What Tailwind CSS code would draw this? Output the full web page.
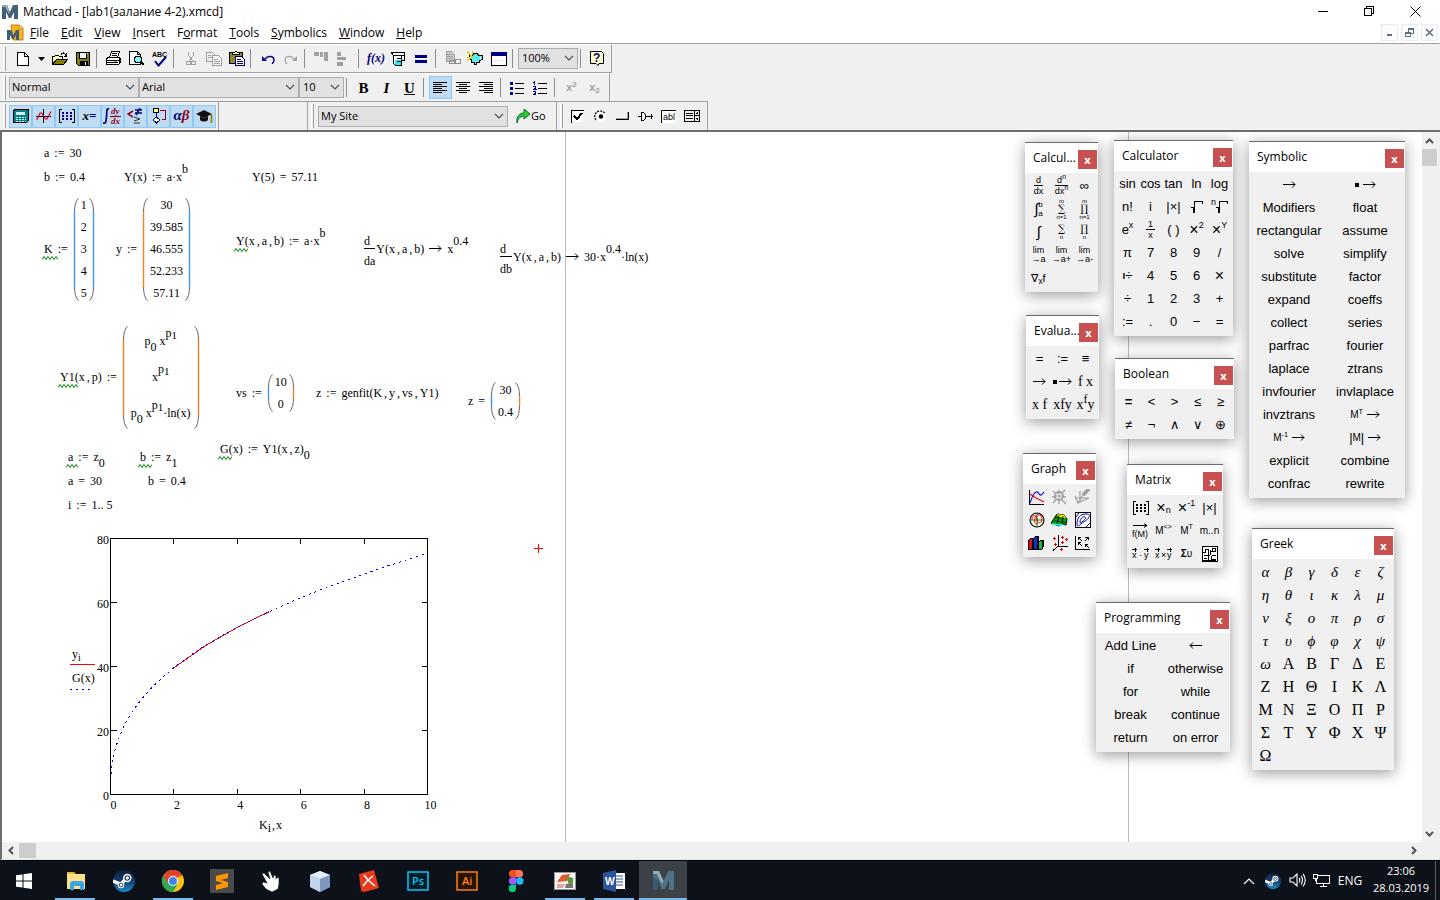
<!DOCTYPE html>
<html lang="ru">
<head>
    <meta charset="UTF-8">
    <meta name="viewport" content="width=device-width, initial-scale=1.0">
    <title>Mathcad - [lab1(залание 4-2).xmcd]</title>
    <script src="https://cdn.jsdelivr.net/npm/@tailwindcss/browser@4"></script>
</head>
<body class="h-screen flex flex-col overflow-hidden bg-white text-black text-xs font-['Open_Sans',sans-serif]">

    <!-- Title bar -->
    <header class="flex items-center h-[22px] shrink-0">
        <span data-icon="mathcad" class="ml-0.5 mr-[5px] mt-0.5"></span>
        <h1 class="flex-1 mt-0.5">Mathcad - [lab1(залание 4-2).xmcd]</h1>
        <button aria-label="Minimize" class="w-[46px] flex justify-center" data-icon="min"></button>
        <button aria-label="Restore" class="w-[46px] flex justify-center" data-icon="restore"></button>
        <button aria-label="Close" class="w-[46px] flex justify-center mr-0.5" data-icon="close"></button>
    </header>

    <!-- Menu -->
    <nav class="flex items-center h-[21px] shrink-0">
        <span data-icon="doc" class="ml-[7px]"></span>
        <button class="px-1.5"><u>F</u>ile</button>
        <button class="px-1.5"><u>E</u>dit</button>
        <button class="px-1.5"><u>V</u>iew</button>
        <button class="px-1.5"><u>I</u>nsert</button>
        <button class="px-1.5">F<u>o</u>rmat</button>
        <button class="px-1.5"><u>T</u>ools</button>
        <button class="px-1.5"><u>S</u>ymbolics</button>
        <button class="px-1.5"><u>W</u>indow</button>
        <button class="px-1.5"><u>H</u>elp</button>
        <div class="ml-auto mr-0.5 flex gap-[3px] text-[#5d6f85]">
            <button aria-label="Minimize document" class="size-[17px] border border-[#ececec] bg-[#fcfcfc] flex items-center justify-center" data-icon="mdiMin"></button>
            <button aria-label="Restore document" class="size-[17px] border border-[#ececec] bg-[#fcfcfc] flex items-center justify-center" data-icon="mdiRestore"></button>
            <button aria-label="Close document" class="size-[17px] border border-[#ececec] bg-[#fcfcfc] flex items-center justify-center" data-icon="mdiClose"></button>
        </div>
    </nav>

    <!-- Toolbars -->
    <section class="bg-[#f0f0f0] border-t border-[#a0a0a0] shrink-0">
        <div class="flex items-center w-fit h-[29px] border-t border-t-white border-b border-b-[#a0a0a0] border-r border-r-[#a0a0a0] pr-[3px]">
            <i class="w-[3px] h-6 ml-[3px] mr-[5px] border-l border-l-white border-r border-r-[#a0a0a0]"></i>
            <div id="standardBar" class="flex items-center"></div>
            <div class="relative">
                <select aria-label="Zoom" class="appearance-none block w-[60px] h-[21px] pl-[3px] text-[11px] bg-[#e1e1e1] border border-[#adadad]"><option>100%</option></select>
                <span data-icon="chevron" class="absolute right-1 top-[7px] pointer-events-none"></span>
            </div>
            <i class="w-px h-[19px] bg-[#8c8c8c] ml-0.5 mr-1"></i>
            <button aria-label="Help" class="w-[23px] h-[22px] flex items-center justify-center" data-icon="help"></button>
        </div>

        <div class="flex items-center w-fit h-[28px] border-t border-t-white border-r border-r-[#a0a0a0] pr-[3px]">
            <i class="w-[3px] h-6 mx-[3px] border-l border-l-white border-r border-r-[#a0a0a0]"></i>
            <div class="relative">
                <select aria-label="Style" class="appearance-none block w-[130px] h-[21px] pl-0.5 text-[11px] bg-[#e1e1e1] border border-[#adadad]"><option>Normal</option></select>
                <span data-icon="chevron" class="absolute right-1 top-[7px] pointer-events-none"></span>
            </div>
            <div class="relative">
                <select aria-label="Font" class="appearance-none block w-[160px] h-[21px] pl-0.5 text-[11px] bg-[#e1e1e1] border border-[#adadad]"><option>Arial</option></select>
                <span data-icon="chevron" class="absolute right-1 top-[7px] pointer-events-none"></span>
            </div>
            <div class="relative">
                <select aria-label="Size" class="appearance-none block w-[45px] h-[21px] pl-[3px] text-[11px] bg-[#e1e1e1] border border-[#adadad]"><option>10</option></select>
                <span data-icon="chevron" class="absolute right-1 top-[7px] pointer-events-none"></span>
            </div>
            <div id="formatBar" class="flex items-center"></div>
        </div>

        <div class="flex w-fit h-[29px] border-t border-t-[#a0a0a0]">
            <div class="flex items-center pr-0.5 border-r border-[#a0a0a0]">
                <i class="w-[3px] h-6 mx-[3px] border-l border-l-white border-r border-r-[#a0a0a0]"></i>
                <div id="mathBar" class="flex items-center"></div>
            </div>
            <div class="w-[89px] border-r border-[#a0a0a0]"></div>
            <div class="flex items-center border-r border-[#a0a0a0] pr-2.5">
                <i class="w-[3px] h-6 ml-[3px] mr-1 border-l border-l-white border-r border-r-[#a0a0a0]"></i>
                <div class="relative">
                    <select aria-label="Site" class="appearance-none block w-[190px] h-[21px] pl-0.5 text-[11px] bg-[#e1e1e1] border border-[#adadad]"><option>My Site</option></select>
                    <span data-icon="chevron" class="absolute right-1 top-[7px] pointer-events-none"></span>
                </div>
                <button class="flex items-center pl-2 text-[11px]"><span data-icon="go"></span>Go</button>
            </div>
            <div class="flex items-center border-r border-[#a0a0a0] pr-[3px]">
                <i class="w-[3px] h-6 mx-[3px] border-l border-l-white border-r border-r-[#a0a0a0]"></i>
                <div id="controlsBar" class="flex items-center"></div>
            </div>
        </div>
    </section>

    <!-- Worksheet -->
    <main class="flex-1 min-h-0 flex border-t-2 border-l-2 border-[#6e6e6e] border-b border-b-[#e3e3e3] bg-[#f0f0f0]">
        <div class="flex-1 min-w-0 flex flex-col">
            <div id="sheet" class="relative flex-1 overflow-hidden bg-white font-['Liberation_Serif',serif]">
                <i class="absolute inset-y-0 left-[563px] w-px bg-[#bcbcbc]"></i>
                <i class="absolute inset-y-0 left-[1126px] w-px bg-[#bcbcbc]"></i>
            </div>
            <div class="h-[17px] flex items-center text-[#505050]">
                <span data-icon="left" class="w-[17px] flex justify-center"></span>
                <i class="w-[17px] h-[15px] bg-[#cdcdcd]"></i>
                <span data-icon="right" class="ml-auto w-[17px] flex justify-center"></span>
            </div>
        </div>
        <div class="w-[15px] mr-[3px] mb-[17px] flex flex-col items-center text-[#505050]">
            <span data-icon="up" class="h-[17px] flex items-center"></span>
            <i class="w-full h-[17px] bg-[#cdcdcd]"></i>
            <span data-icon="down" class="mt-auto h-[17px] flex items-center"></span>
        </div>
    </main>

    <!-- Taskbar -->
    <footer class="h-10 shrink-0 flex bg-[#0d1119] text-white border-t border-[#05070c]">
        <button aria-label="Start" class="w-12 mr-[3px] flex items-center justify-center" data-icon="start"></button>
        <div id="tasks" class="flex gap-px"></div>
        <div class="ml-auto flex items-center mr-1">
            <button aria-label="Show hidden icons" class="w-6 flex justify-center" data-icon="trayUp"></button>
            <button aria-label="Steam" class="w-6 flex justify-center" data-icon="steamSmall"></button>
            <button aria-label="Volume" class="w-6 flex justify-center" data-icon="volume"></button>
            <button aria-label="Network" class="w-6 flex justify-center" data-icon="network"></button>
            <button class="w-[34px] text-center">ENG</button>
            <button class="w-[68px] text-center leading-[17px] text-[11px] pb-1">23:06<br>28.03.2019</button>
            <i class="w-px h-10 bg-[#5b5e64]"></i>
        </div>
    </footer>

    <script>
        function svg(w, h, body) {
            return `<svg width="${w}" height="${h}" viewBox="0 0 ${w} ${h}" fill="none" stroke="none">${body}</svg>`;
        }
        // 1px line art on the pixel grid
        function px(w, h, body) {
            return `<svg width="${w}" height="${h}" viewBox="0 0 ${w} ${h}" fill="none" stroke="#000" shape-rendering="crispEdges">${body}</svg>`;
        }

        const steam = `<circle cx="11" cy="11" r="11" fill="url(#steamBg)"/><defs><linearGradient id="steamBg" x1="0" y1="0" x2="0" y2="1"><stop offset="0" stop-color="#10203c"/><stop offset=".5" stop-color="#123c6c"/><stop offset="1" stop-color="#1a8fc9"/></linearGradient></defs><path d="M0 11l8 3.400 5-6" stroke="#fff" stroke-width="3.400"/><circle cx="14.300" cy="8" r="4.200" fill="#fff"/><circle cx="14.300" cy="8" r="2.200" stroke="#12305a" stroke-width="1.100"/><circle cx="8" cy="15" r="3.300" fill="#fff"/><circle cx="8" cy="15" r="1.900" stroke="#12305a" stroke-width=".9"/>`;
        const bigM = `<path d="M1 2h6l4.500 10L16 2h6v19h-5V11l-4 9h-3.500L6 11v10H1z" fill="#4f7186"/><path d="M1 2h6l4.500 10L10 15 5 5H1z" fill="#98a9b4"/><path d="M6 11v10H1V8z" fill="#3a5a70"/>`;
        const vec = x => `M${x} 3.500h5M${x + 3} 1.500v4`;

        const icons = {
            mathcad: svg(16, 16, `<path d="M0 1h5l3 7 3-7h5v14h-4V8l-3 6H7L4 8v7H0z" fill="#3f5f77"/><path d="M0 1h5l3 7-1 2-4-7H0z" fill="#93a6b3"/>`),
            doc: svg(17, 17, `<path d="M4 1h8l4 3v12H6z" fill="#f8b51c" stroke="#c78208"/><path d="M12 1v4h4" fill="#fde59a" stroke="#c78208"/><path d="M0 6h4l2.500 5L9 6h3v10H9v-5l-2 4H5l-2-4v5H0z" fill="#3f5f77"/>`),
            min: px(11, 11, `<path d="M0 5.500h10"/>`),
            restore: px(11, 11, `<path d="M.5 2.500h7v7h-7zM2.500 2.500v-2h7v7h-2"/>`),
            close: svg(11, 11, `<path d="M.5.5l10 10M10.500.5l-10 10" stroke="#000"/>`),
            mdiMin: px(9, 9, `<path d="M2 7h5" stroke="#5d6f85" stroke-width="2"/>`),
            mdiRestore: px(9, 9, `<path d="M.5 4.500h5v4h-5zM3.500 4V.500h5v5H6M3 1.500h6M0 5.500h6" stroke="#5d6f85"/>`),
            mdiClose: svg(9, 9, `<path d="M1 1l7 7M8 1L1 8" stroke="#5d6f85" stroke-width="1.600"/>`),
            chevron: svg(10, 7, `<path d="M1 1l4 4 4-4" stroke="#505050" stroke-width="1.100"/>`),
            up: svg(9, 8, `<path d="M1 6l3.500-3.500L8 6" stroke="#505050" stroke-width="2"/>`),
            down: svg(9, 8, `<path d="M1 2l3.500 3.500L8 2" stroke="#505050" stroke-width="2"/>`),
            left: svg(8, 9, `<path d="M6 1L2.500 4.500 6 8" stroke="#505050" stroke-width="2"/>`),
            right: svg(8, 9, `<path d="M2 1l3.500 3.500L2 8" stroke="#505050" stroke-width="2"/>`),
            arrow: svg(13, 7, `<path d="M0 3.500h12M9 .5l3 3-3 3" stroke="#000"/>`),
            arrowLeft: svg(13, 7, `<path d="M1 3.500h12M4 .5l-3 3 3 3" stroke="#000"/>`),

            // standard toolbar
            'new': px(12, 14, `<path d="M.5.500h7l4 4v9H.500z" fill="#fff"/><path d="M7.500.500v4h4"/>`),
            drop: svg(7, 4, `<path d="M0 0h7L3.500 4z" fill="#000"/>`),
            open: px(16, 14, `<path d="M.5 12V4.500h2l1-1h3l1 1h3v3" fill="#ffffb0"/><path d="M.5 12.500l4-5h11l-4 5z" fill="#808000"/><path d="M9 2.500c2-3 4-1 5 1M14.500 1v3M12 4.500h3"/>`),
            save: px(14, 14, `<path d="M.5.500h13v13H2.500l-2-2z" fill="#808000"/><path d="M3.500.500h7v6h-7z" fill="#f0f0f0"/><path d="M4 9h7v4H4z" fill="#000"/><path d="M9.500 10v3" stroke="#fff"/><path d="M11.500 1v1" stroke="#fff"/>`),
            print: px(17, 15, `<path d="M4.500 6.500l2-6h8l-2 6" fill="#fff"/><path d="M7 2.500h5M6.500 4.500h5"/><path d="M1.500 7.500l2-1h11l1 1v4l-2 2h-12z" fill="#fff"/><path d="M1 9.500h13M14.500 7v5M1 11.500h12M3 13.500h10"/><path d="M9 10.500h3" stroke="#b9b900"/>`),
            preview: px(16, 15, `<path d="M.5.500h8l3 3v10H.500z" fill="#fff"/><path d="M8.500.500v3h3"/><circle cx="9" cy="8.500" r="3.500" fill="#8ff"/><path d="M12 11l3 3" stroke-width="2.500"/>`),
            spell: svg(16, 16, `<text x="0" y="6" font-family="Liberation Sans" font-size="7" font-weight="700" fill="#000">ABC</text><path d="M3 10l3.500 4.500L14 6" stroke="#00007f" stroke-width="2"/>`),
            cut: px(10, 14, `<path d="M2.500 0v3l4 6M7.500 0v3l-4 6" stroke="#a0a0a0"/><circle cx="2.500" cy="11" r="2" stroke="#a0a0a0"/><circle cx="7.500" cy="11" r="2" stroke="#a0a0a0"/>`),
            copy: px(16, 14, `<path d="M.5.500h6l3 3v6h-9z" stroke="#a0a0a0" fill="#eee"/><path d="M6.500 3.500h6l3 3v7h-9z" stroke="#a0a0a0" fill="#f4f4f4"/><path d="M2 3.500h3M2 5.500h4M8 7.500h4M8 9.500h6M8 11.500h6" stroke="#a0a0a0"/>`),
            paste: px(16, 15, `<path d="M.5 1.500h13v11H.500z" fill="#8a8a30"/><path d="M3.500 3.500h7v-2h-2l-1-1h-1l-1 1h-2z" fill="#ffff90"/><path d="M6.500 5.500h6l3 3v6h-9z" fill="#fff" stroke="#00007f"/><path d="M8 8.500h4M8 10.500h6M8 12.500h6" stroke="#00007f"/>`),
            undo: svg(14, 10, `<path d="M1 2v5h5z" fill="#00007f"/><path d="M4 5c3-4 9-3 9 1 0 2-1 3-2 4" stroke="#00007f" stroke-width="1.400"/>`),
            redo: svg(14, 10, `<path d="M13 2v5H8z" fill="#a0a0a0"/><path d="M10 5C7 1 1 2 1 6c0 2 1 3 2 4" stroke="#a0a0a0" stroke-width="1.200"/>`),
            alignAcross: px(15, 15, `<path d="M0 1h5v4H0zM6 1h3v5H6zM10 1h4v9h-4z" fill="#a0a0a0" stroke="none"/>`),
            alignDown: px(15, 15, `<path d="M0 1h4v4H0zM0 6h9v3H0zM0 11h6v4H0z" fill="#a0a0a0" stroke="none"/>`),
            unit: px(15, 14, `<path d="M2.500 3.500h8v10h-6l-2-2zM.5.500h13v3H2.500L.5 1zM11 3.500h2.500v5H11" fill="#fff"/><path d="M3.500 8h6v5h-5z" fill="#2ee" stroke="none"/><path d="M6 6.500h4M6 9.500h4"/>`),
            equals: px(13, 10, `<path d="M0 2.500h12M0 7.500h12" stroke="#00007f" stroke-width="3"/>`),
            link: px(16, 15, `<path d="M1.500.500h5l3 3v7h-8z" fill="#ccc" stroke="#a0a0a0"/><path d="M2 3.500h6M2 5.500h6M2 7.500h6" stroke="#a0a0a0"/><path d="M4.500 9.500h6v3h-6zM9.500 8.500h6v4h-6z" stroke="#909090"/>`),
            component: px(17, 15, `<path d="M2.500 4.500h3l1-2h4l1 2h4v4l-3 1v2h-3v2H8l-1-2H5l-1-3H2.500z" fill="#5ee"/><path d="M0 .5l6 6M5 0v4M0 6h5M0 10l4-3" stroke="#e5c800"/><path d="M13.500 6v3" stroke="#fff"/>`),
            windowed: px(16, 14, `<path d="M.5.500h15v13H.500z" fill="#fff"/><path d="M0 2h16" stroke="#00007f" stroke-width="4"/><path d="M3 8.500h3M8 8.500h2M12 8.500h2" stroke="#ddd"/>`),
            help: svg(14, 15, `<path d="M.5.500h11l2 2v10H9l-1 2-2-2H.500z" fill="#ffffc8" stroke="#000"/><text x="3" y="11" font-family="Liberation Sans" font-size="12" font-weight="700" fill="#00007f">?</text>`),
            fx: svg(19, 15, `<text x="1" y="11" font-family="Liberation Serif" font-size="12" font-style="italic" font-weight="700" fill="#00007f">f(x)</text>`),

            // formatting toolbar
            alignL: px(15, 12, `<path d="M0 .5h14M0 2.500h9M0 4.500h14M0 6.500h9M0 8.500h14M0 10.500h9"/>`),
            alignC: px(15, 12, `<path d="M0 .5h14M3 2.500h8M0 4.500h14M3 6.500h8M0 8.500h14M3 10.500h8"/>`),
            alignR: px(15, 12, `<path d="M0 .5h14M5 2.500h9M0 4.500h14M5 6.500h9M0 8.500h14M5 10.500h9"/>`),
            bullets: px(15, 14, `<path d="M0 1h3v3H0zM0 5.500h3v3H0zM0 10.500h3v3H0z" fill="#00007f" stroke="none"/><path d="M5 2.500h9M5 7.500h9M5 12.500h9"/>`),
            numbers: px(15, 14, `<path d="M0 1.500h1M1.500 0v4M0 5.500h2.500v1.500L.5 8.500h3M0 10.500h2.500v3H0M1 12h1" stroke="#00007f"/><path d="M5 2.500h9M5 7.500h9M5 12.500h9"/>`),

            // math toolbar
            calc: px(16, 14, `<path d="M.5 1.500l2-1h13v11l-2 2H.500z" fill="#0b7f86"/><path d="M3 3h9v3H3z" fill="#cff" stroke="none"/><path d="M2.500 8.500h10M2.500 10.500h10M2.500 12.500h10" stroke="#cff" stroke-dasharray="2 1"/>`),
            graph: svg(16, 16, `<path d="M7.500 1v14M0 8.500h15" stroke="#000"/><path d="M0 11h1.500L4 5h1.500l4 6H11l4-7.500" stroke="#e00020" stroke-width="1.200"/>`),
            matrix: px(16, 14, `<path d="M3 .5H.5v13H3M13 .5h2.500v13H13"/><path d="M3 3.500h10M3 6.500h10M3 9.500h10" stroke="#00007f" stroke-width="2" stroke-dasharray="2 2"/><path d="M7 6.500h2" stroke="#900" stroke-width="2"/>`),
            integral: svg(19, 19, `<path d="M6 2C3 1 4 5 3.500 10S3 17 0 16" stroke="#00007f" stroke-width="1.700"/><text x="8" y="7" font-family="Liberation Serif" font-size="9" font-style="italic" font-weight="700" fill="#900020">dy</text><path d="M7 9.500h11" stroke="#900020" stroke-width="1.200"/><text x="8" y="17" font-family="Liberation Serif" font-size="9" font-style="italic" font-weight="700" fill="#900020">dx</text>`),
            compare: svg(17, 16, `<path d="M6 3L1 6l5 3" stroke="#900020" stroke-width="1.500"/><path d="M8 2h7M8 5h7M13 0L9 7" stroke="#00007f" stroke-width="1.600"/><path d="M7 9l6 2-6 2M7 15h6" stroke="#333"/>`),
            program: px(16, 16, `<path d="M2.500.500h5v4h-5z" fill="#ff8"/><path d="M5.500 5v4M5.500 9l-3.500 3 3.500 3 3.500-3z" fill="#ff8" stroke="#00007f"/><path d="M9 2.500h5.500v9H11" stroke="#900020"/>`),
            cap: svg(17, 16, `<path d="M0 6l8-4 8 4-8 4z" fill="#111"/><path d="M4 8v4c2 2 6 2 8 0V8l-4 2z" fill="#111"/><path d="M15.500 6v9" stroke="#8a8000" stroke-width="1.600"/>`),
            go: svg(15, 16, `<path d="M1 15C0 8 4 5 8 5V1l6 5-6 5V8C5 8 2 10 1 15z" fill="#2bd32b" stroke="#063"/>`),

            // controls toolbar
            check: px(13, 13, `<path d="M1 1h11v11H1z" fill="#fff" stroke="none"/><path d="M.5 13V.500H13"/><path d="M3 6l3 3 5-6" stroke-width="2"/>`),
            radio: svg(13, 13, `<circle cx="6.500" cy="6.500" r="5.500" fill="#fff"/><path d="M2 10A5.500 5.500 0 0 1 10.500 3" stroke="#000" stroke-width="1.200" stroke-dasharray="2 1"/><circle cx="7" cy="6.500" r="2.200" fill="#000"/>`),
            push: px(14, 10, `<path d="M0 8.500h12.500V1"/><path d="M0 7.500h11.500V1" stroke="#a0a0a0"/>`),
            slider: px(16, 11, `<path d="M0 5.500h3M7 5.500h8M13.500 3v5"/><path d="M3.500 1.500h2l2 2v4l-2 2h-2z"/>`),
            textbox: svg(16, 13, `<rect width="15" height="13" fill="#fff"/><path d="M.5 13V.500H15" stroke="#000"/><text x="2" y="10" font-family="Liberation Sans" font-size="9" fill="#000">abl</text>`),
            listbox: px(16, 12, `<path d="M.5.500h15v11H.500zM10.500 0v12M10 5.500h6M2 3.500h7M2 5.500h7M2 8.500h7"/><path d="M12 3.500h2M13 2v2M12 8.500h2M13 8v2"/>`),

            // graph palette
            g1: px(16, 16, `<path d="M.5 1v14H15"/><g shape-rendering="auto"><path d="M1 14C3 9 4 4 7 3s3 4 5 3 2-2 3-3" stroke="#00f" stroke-width="1.100"/><path d="M1 5l6 4 8 4" stroke="#e00" stroke-width="1.100"/></g>`),
            g2: svg(17, 16, `<path d="M1 8h14M8 1v14M2 2l13 13M14 1L2 14" stroke="#a0a0a0" stroke-width="1.300"/><circle cx="8" cy="7" r="4" fill="#eee" stroke="#a0a0a0" stroke-width="1.800"/><path d="M5 7h6M8 4v6" stroke="#a0a0a0"/>`),
            g3: svg(17, 16, `<path d="M1 7l3 7 5-8M1 9h14M6 2v12M3 14l12-5" stroke="#a0a0a0" stroke-width="1.200"/><path d="M15 0L9 6" stroke="#a0a0a0" stroke-width="3.500"/>`),
            g4: svg(16, 16, `<circle cx="8" cy="8" r="7" fill="#fff" stroke="#000" stroke-width="1.100"/><path d="M8 1v14M1 8h14" stroke="#080"/><path d="M3 8c-1-5 5-6 5-1s5 5 5 0-6-6-7-1 0 6 3 6" stroke="#e00"/>`),
            g5: svg(17, 16, `<path d="M0 11l4-6 2-3 7 1 3 4-1 6-4-1-3 2z" fill="#0a0" stroke="#000"/><path d="M6 2l7 1 2 3-8-1z" fill="#ee0"/><path d="M1 11l6 1 6 0-3 2-8-1z" fill="#2ee"/><path d="M4 5l9 2M3 9l11 1M8 3L6 12M12 4l-1 8" stroke="#000" stroke-width=".8"/>`),
            g6: svg(16, 16, `<rect x=".5" y=".5" width="15" height="15" fill="#fff" stroke="#000"/><path d="M2 12C2 6 5 2 11 2s3 5-1 7-8 8-8 3zM5 10c0-3 3-6 5-5s-1 3-2 4-3 3-3 1zM1 5l3-4M11 15l4-4" stroke="#0000b0"/>`),
            g7: px(17, 14, `<path d="M.5 4.500l2-2h3v11h-5z" fill="#d01020"/><path d="M5.500 2.500l2-2h3v13h-5z" fill="#1030e0"/><path d="M10.500 6.500l2-2h3v6l-2 3h-3z" fill="#10c030"/><path d="M4.500 3v11M9.500 1v13M14.500 5v8"/>`),
            g8: px(16, 16, `<path d="M6.500 0v11H16M6.500 11L1 15.500"/><path d="M1 3.500h3M2.500 2v3M9 2.500h3M10.500 1v3M2 9.500h3M3.500 8v3M9 7.500h3M10.500 6v3M13 4.500h3M14.500 3v3M8 14.500h3M9.500 13v3" stroke="#e00"/>`),
            g9: px(15, 15, `<path d="M.5.500v14H15"/><path d="M3 2.500h3M3.500 2v3M4 3l3 3M10 2.500h4M13.500 2v3M13 3l-3 3M3 7.500h3M3.500 7v3M4 8l3 3M10 9.500h3M10.500 9v3M11 10l3 3"/>`),

            // matrix palette
            picture: px(16, 16, `<path d="M.5.500h15v15H.500z" fill="#fff"/><path d="M1 6.500h2l1-3h2v12M2 9.500h6M2 12.500h3M8.500 4v5M8 5.500h2M10 9.500h4M9.500 10v3h4M1 14.500h13"/><circle cx="12" cy="4" r="2"/>`),
            fM: svg(20, 16, `<path d="M2 2.500h14M13 .5l3 2-3 2" stroke="#000"/><text x="1" y="14" font-family="Liberation Sans" font-size="9" fill="#000">f(M)</text>`),
            dot: px(20, 16, `<path d="${vec(1)}${vec(13)}"/><g stroke="none" fill="#000" font-family="Liberation Sans" font-size="9"><text x="1" y="12">x</text><text x="8" y="12">·</text><text x="13" y="12">y</text></g>`),
            cross: px(20, 16, `<path d="${vec(1)}${vec(13)}"/><g stroke="none" fill="#000" font-family="Liberation Sans" font-size="9"><text x="1" y="12">x</text><text x="7" y="12">×</text><text x="13" y="12">y</text></g>`),
            mat: px(16, 14, `<path d="M3 .5H.5v13H3M13 .5h2.500v13H13"/><path d="M3 3.500h10M3 6.500h10M3 9.500h10" stroke-width="2" stroke-dasharray="2 2"/>`),
            root: px(12, 12, `<path d="M0 6.500h2.500v5h1V.500H11.500v2"/>`),

            // taskbar
            start: svg(16, 16, `<path d="M0 2.300L6.500 1.400v6.100H0zM7.500 1.200L16 0v7.500H7.500zM0 8.500h6.500v6.100L0 13.700zM7.500 8.500H16V16l-8.500-1.200z" fill="#fff"/>`),
            explorer: svg(24, 20, `<path d="M4 1h7l2 2h8v4H4z" fill="#e8b34a"/><path d="M4 3h18v15H4z" fill="#ffe08a"/><path d="M7 19v-7l2-2h10l2 2v7h-4v-4h-6v4z" fill="#3aa5e0"/>`),
            steam: svg(22, 22, steam),
            chrome: svg(22, 22, `<circle cx="11" cy="11" r="11" fill="#fbc116"/><path d="M1.500 5.500A11 11 0 0 1 20.500 5.500H11z" fill="#e33b2e"/><path d="M1.500 5.500L6.500 14 11 9l9.500-3.500z" fill="#e33b2e"/><path d="M1.500 5.500A11 11 0 0 0 11 22l4.800-8.300L6.200 13.700z" fill="#2da94f"/><circle cx="11" cy="11" r="5" fill="#fff"/><circle cx="11" cy="11" r="4" fill="#3f83f3"/>`),
            sublime: svg(24, 24, `<rect width="24" height="24" rx="1" fill="#4b4b4b"/><path d="M6 7l12-3v5l-7 2 7 2v5L6 21v-5l7-2-7-2z" fill="#ff9800"/>`),
            hand: svg(22, 22, `<path d="M2 4l2-1 6 6-2-7 2-1 3 7 1-3 2 1v3l2-2 1 1v6l-1 5-6 3-6-3-4-5 1-2 4 1z" fill="#fff" stroke="#222" stroke-width=".7"/>`),
            cube: svg(22, 22, `<path d="M11 1l10 4v12l-10 5L1 17V5z" fill="#a9bcdc"/><path d="M11 1l10 4-10 4L1 5z" fill="#e3f0fb"/><path d="M11 9l10-4v12l-10 5z" fill="#7f96c2"/><path d="M1 5l10 4v13L1 17z" fill="#c3d3ea"/>`),
            xmind: svg(22, 22, `<path d="M1 4l15-4 5 18-15 4-3-1z" fill="#ea3a1c"/><path d="M6 5l4 5 5-4M10 10l7 6M10 10l-5 6" stroke="#fff" stroke-width="1.600"/>`),
            word: svg(22, 22, `<path d="M12 3h10v16H12z" fill="#fff"/><path d="M13 6h7M13 9h7M13 12h7M13 15h7" stroke="#2b579a" stroke-width="1.200"/><path d="M0 3l13-3v22L0 19z" fill="#2b579a"/><text x="2" y="15" font-family="Open Sans" font-size="10" font-weight="700" fill="#fff">W</text>`),
            ps: svg(22, 20, `<rect x="1" y="1" width="20" height="18" fill="#001d26" stroke="#00c8ff" stroke-width="1.500"/><text x="5" y="14" font-family="Open Sans" font-size="11" font-weight="600" fill="#00c8ff">Ps</text>`),
            ai: svg(22, 20, `<rect x="1" y="1" width="20" height="18" fill="#261300" stroke="#ff7f18" stroke-width="1.500"/><text x="6" y="14" font-family="Open Sans" font-size="11" font-weight="600" fill="#ff7f18">Ai</text>`),
            figma: svg(16, 22, `<path d="M8 0H4a3.700 3.700 0 0 0 0 7.300h4z" fill="#f24e1e"/><path d="M8 0h4a3.700 3.700 0 0 1 0 7.300H8z" fill="#ff7262"/><path d="M8 7.300H4a3.700 3.700 0 0 0 0 7.300h4z" fill="#a259ff"/><circle cx="11.800" cy="11" r="3.700" fill="#1abcfe"/><path d="M8 14.700H4A3.700 3.700 0 1 0 8 18.300z" fill="#0acf83"/>`),
            photos: svg(22, 18, `<rect x=".5" y=".5" width="21" height="17" fill="#f4f4f0" stroke="#999"/><path d="M3 10l5-7 8-1-3 7z" fill="#e4572a"/><path d="M12 4l7 2v5l-4 2z" fill="#5b9a3a"/><path d="M3 12h8l-2 4H3z" fill="#dca8a0"/><path d="M12 12l7-1v5h-8z" fill="#777"/>`),
            mBig: svg(23, 23, bigM),
            trayUp: svg(12, 8, `<path d="M1 7l5-5 5 5" stroke="#fff" stroke-width="1.200"/>`),
            steamSmall: `<svg width="16" height="16" viewBox="0 0 22 22" fill="none">${steam}</svg>`,
            volume: svg(17, 15, `<path d="M1 5h3l4-4v12L4 9H1zM10 5c1 1 1 3 0 4.500M12 3c2 2 2 6 0 8.500M14 1c3 3 3 9 0 12.500" stroke="#fff" stroke-width="1.100"/>`),
            network: px(17, 15, `<path d="M5 2.500h11.500v8h-13V6M7 13.500h7M10.500 11v3M.5 1.500h4v4h-4zM2.500 6v2" stroke="#fff"/>`)
        };

        document.querySelectorAll('[data-icon]').forEach(el => { el.innerHTML = icons[el.dataset.icon]; });

        // ---- toolbars: '|' is a separator, '*' marks a pressed button ----
        function fillBar(id, items) {
            document.getElementById(id).innerHTML = items.map(item => {
                if (item === '|') return '<i class="w-px h-[19px] bg-[#8c8c8c] ml-0.5 mr-[5px]"></i>';
                const pressed = item[0] === '*';
                const name = item.replace('*', '');
                const body = icons[name] || name;
                if (name === 'drop') return `<button aria-label="New from template" class="w-[14px] h-[22px] flex items-center justify-center">${body}</button>`;
                return pressed
                    ? `<button class="w-[23px] h-[23px] flex items-center justify-center bg-[#c0dcf3] border border-[#90c8f6]">${body}</button>`
                    : `<button class="w-[23px] h-[23px] flex items-center justify-center">${body}</button>`;
            }).join('');
        }

        const letter = (cls, t) => `<span class="font-['Liberation_Serif',serif] text-[15px] leading-4 ${cls}">${t}</span>`;
        const grey = t => `<span class="font-['Liberation_Sans',sans-serif] text-[11px] font-bold text-[#a0a0a0]">${t}</span>`;

        fillBar('standardBar', ['new', 'drop', 'open', 'save', '|', 'print', 'preview', 'spell', '|', 'cut', 'copy', 'paste', '|', 'undo', 'redo', '|', 'alignAcross', 'alignDown', '|', 'fx', 'unit', 'equals', '|', 'link', 'component', 'windowed', '|']);
        fillBar('formatBar', ['|', letter('font-bold', 'B'), letter('font-bold italic', 'I'), letter('font-bold underline', 'U'), '|', '*alignL', 'alignC', 'alignR', '|', 'bullets', 'numbers', '|',
            grey('x<sup class="text-[8px]">2</sup>'), grey('x<sub class="text-[8px]">2</sub>')]);
        fillBar('mathBar', ['*calc', '*graph', '*matrix', `*<b class="font-['Liberation_Serif',serif] text-[13px] text-[#00007f]"><i class="text-black">x</i>=</b>`, '*integral', '*compare', '*program',
            `*<b class="font-['Liberation_Serif',serif] text-[15px] italic text-[#00007f]">α<span class="text-[#900020]">β</span></b>`, '*cap']);
        fillBar('controlsBar', ['check', 'radio', 'push', 'slider', 'textbox', 'listbox']);

        // ---- worksheet regions ----
        const c = '<span class="px-0.5">,</span>';
        const sup = t => `<sup class="text-xs leading-none -top-2">${t}</sup>`;
        const sub = t => `<sub class="text-xs leading-none -bottom-1.5">${t}</sub>`;
        const p1 = sup('p<sub class="text-[11px] leading-none -bottom-0.5">1</sub>');
        const frac = (a, b) => `<span class="flex flex-col items-start -mr-1"><span class="pt-1.5 leading-[14px] w-full border-b border-black">${a}</span><span class="pt-1">${b}</span></span>`;

        // name with the green redefinition squiggle below it
        function redef(name, width) {
            let d = 'M0 3.500';
            for (let x = 2; x <= width; x += 2) d += `L${x} ${x % 4 ? .5 : 3.500}`;
            return `<span class="relative">${name}<svg class="absolute -left-0.5 top-[14px]" width="${width}" height="4" fill="none" stroke="#008000"><path d="${d}"/></svg></span>`;
        }

        function matrix(rows, h, left, right, rowClass) {
            const paren = (flip, color) => `<svg width="6" height="${h}" fill="none"><g ${flip ? 'transform="translate(6 0) scale(-1 1)"' : ''}><path d="M5.500.5Q1.500 4 1.500 14M1.500 ${h - 14}Q1.500 ${h - 4} 5.500 ${h - .5}" stroke="#666"/><path d="M1.500 14V${h - 14}" stroke="${color}" stroke-width="1.500"/></g></svg>`;
            return `<span class="flex items-center">${paren(false, left)}<span class="flex flex-col items-center px-0.5">${rows.map(r => `<span class="${rowClass}">${r}</span>`).join('')}</span>${paren(true, right)}</span>`;
        }

        const blue = '#4a9be8', orange = '#e08a34';
        const regions = [
            [42, 13, ['a', ':=', '30']],
            [42, 37, ['b', ':=', '0.4']],
            [122, 37, ['Y(x)', ':=', `a·x${sup('b')}`]],
            [250, 37, ['Y(5)', '=', '57.11']],
            [42, 62, [redef('K', 16), ':=', matrix([1, 2, 3, 4, 5], 103, blue, blue, 'leading-[22px]')]],
            [114, 62, ['y', ':=', matrix(['30', '39.585', '46.555', '52.233', '57.11'], 103, orange, blue, 'leading-[22px]')]],
            [234, 101, [redef('Y', 14) + `(x${c}a${c}b)`, ':=', `a·x${sup('b')}`]],
            [362, 96, [frac('d', 'da'), `Y(x${c}a${c}b)`, icons.arrow, `x${sup('0.4')}`]],
            [498, 104, [frac('d', 'db'), `Y(x${c}a${c}b)`, icons.arrow, `30·x${sup('0.4')}·ln(x)`]],
            [58, 191, [redef('Y1', 20) + `(x${c}p)`, ':=', matrix([`p${sub('0')} x${p1}`, `x${p1}`, `p${sub('0')} x${p1}·ln(x)`], 103, orange, orange, 'h-9 leading-9 px-px whitespace-nowrap')]],
            [234, 239, ['vs', ':=', matrix([10, 0], 38, blue, orange, 'leading-[22px]')]],
            [314, 253, ['z', ':=', `genfit(K${c}y${c}vs${c}Y1)`]],
            [466, 247, ['z', '=', matrix([30, 0.4], 38, blue, orange, 'leading-[22px]')]],
            [66, 317, [redef('a', 12), ':=', `z${sub('0')}`]],
            [138, 317, [redef('b', 14), ':=', `z${sub('1')}`]],
            [218, 309, [redef('G', 14) + '(x)', ':=', `Y1(x${c}z)${sub('0')}`]],
            [66, 341, ['a', '=', '30']],
            [146, 341, ['b', '=', '0.4']],
            [66, 365, ['i', ':=', '1.. 5']]
        ];

        const sheet = document.getElementById('sheet');
        regions.forEach(([x, y, parts]) => {
            const el = document.createElement('div');
            el.className = 'absolute flex items-center gap-[5px] whitespace-nowrap';
            el.style.left = x + 'px';
            el.style.top = y + 'px';
            el.innerHTML = parts.map(p => `<span>${p}</span>`).join('');
            sheet.appendChild(el);
        });

        // ---- plot ----
        const X = v => 42.500 + v * 31.700;
        const Y = v => 264.500 - v * 3.200;
        let curve = '';
        for (let v = 0.02; v <= 10; v += 0.02) curve += `${curve ? 'L' : 'M'}${X(v).toFixed(1)} ${Y(30 * Math.pow(v, 0.4)).toFixed(1)}`;
        const trace = [[2, 39.585], [3, 46.555], [4, 52.233], [5, 57.11]].map(([a, b]) => `${X(a)},${Y(b)}`).join(' ');
        let marks = '';
        [2, 4, 6, 8].forEach(v => { const x = Math.floor(X(v)) + .5; marks += `M${x} 8.500v5M${x} 264.500v-6`; });
        [20, 40, 60].forEach(v => { marks += `M42.500 ${Y(v)}h6M359.500 ${Y(v)}h-6`; });
        const yLabels = [0, 20, 40, 60, 80].map(v => `<text x="41" y="${Y(v) + 5}" text-anchor="end">${v}</text>`).join('');
        const xLabels = [0, 2, 4, 6, 8, 10].map(v => `<text x="${X(v) + 3}" y="279" text-anchor="middle">${v}</text>`).join('');
        sheet.insertAdjacentHTML('beforeend', `
            <svg class="absolute left-[66px] top-[398px]" width="372" height="308" fill="none" font-size="12">
                <g shape-rendering="crispEdges">
                    <path d="M42.500 8.500h317v256h-317z${marks}" stroke="#000"/>
                    <polyline points="${trace}" stroke="#f00"/>
                    <path d="${curve}" stroke="#00f" stroke-width="1" stroke-dasharray="2 4"/>
                    <path d="M2 134.500h25" stroke="#f00"/>
                    <path d="M2 159.500h22" stroke="#00f" stroke-dasharray="2 4"/>
                </g>
                <g fill="#000">${yLabels}${xLabels}
                    <text x="4" y="128">y<tspan dy="3" font-size="10">i</tspan></text>
                    <text x="4" y="152">G(x)</text>
                    <text x="191" y="299">K<tspan dy="3">i</tspan><tspan dx="1" dy="-3">,</tspan><tspan dx="1">x</tspan></text>
                </g>
            </svg>
            <svg class="absolute left-[532px] top-[412px]" width="9" height="9" stroke="#f00" shape-rendering="crispEdges"><path d="M4.500 0v9M0 4.500h9"/></svg>`);

        // ---- palettes ----
        const small = t => `<span class="text-[10px]">${t}</span>`;
        const over = (a, b) => `<span class="flex flex-col items-center text-[9px] leading-[9px]"><span class="border-b border-black px-0.5">${a}</span><span class="pt-px">${b}</span></span>`;
        const big = (a, s, b) => `<span class="flex flex-col items-center text-[6px] leading-[6px]"><span>${a}</span><span class="text-[10px] leading-[10px] font-['DejaVu_Serif',serif]">${s}</span><span>${b}</span></span>`;
        const lim = t => `<span class="flex flex-col items-center text-[9px] leading-[9px]"><span>lim</span><span>→${t}</span></span>`;
        const up = t => `<sup class="text-[9px]">${t}</sup>`;
        const dn = t => `<sub class="text-[9px]">${t}</sub>`;
        const times = '<span class="text-base leading-4">×</span>';
        const serif = t => `<span class="font-['Liberation_Serif',serif] text-sm">${t}</span>`;
        const square = '<i class="size-1 bg-black mr-1"></i>';

        const palettes = [
            { title: 'Calcul...', x: 1023, y: 10, grid: 'grid-cols-[repeat(3,23px)]', cells: [
                over('d', 'dx'), over('d<sup>n</sup>', 'dx<sup>n</sup>'), '∞',
                '<span class="text-[15px]">∫</span><span class="flex flex-col text-[8px] leading-[9px]"><span>b</span><span>a</span></span>', big('m', '∑', 'n=1'), big('m', '∏', 'n=1'),
                '<span class="text-[15px]">∫</span>', big('', '∑', 'n'), big('', '∏', 'n'),
                lim('a'), lim('a+'), lim('a-'), `<span class="text-[11px]">∇<sub>x</sub>f</span>`] },
            { title: 'Calculator', x: 1112, y: 8, grid: 'grid-cols-[repeat(5,23px)]', cells: [
                'sin', 'cos', 'tan', 'ln', 'log', 'n!', 'i', '|×|', icons.root, up('n') + icons.root,
                'e' + up('x'), over('1', 'x'), '( )', times + up('2'), times + up('Y'), 'π', '7', '8', '9', '/',
                '<b class="text-[10px]">ı</b>÷', '4', '5', '6', times, '÷', '1', '2', '3', '+', ':=', '.', '0', '−', '='] },
            { title: 'Evalua...', x: 1024, y: 183, grid: 'grid-cols-[repeat(3,23px)]', cells: [
                '=', ':=', '≡', icons.arrow, '<i class="size-1 bg-black mr-0.5"></i>' + icons.arrow, serif('f x'), serif('x f'), serif('xfy'), serif('x<sup class="text-xs">f</sup>y')] },
            { title: 'Boolean', x: 1113, y: 226, grid: 'grid-cols-[repeat(5,23px)]', cells: ['<b>=</b>', '&lt;', '&gt;', '≤', '≥', '≠', '¬', '∧', '∨', '⊕'] },
            { title: 'Graph', x: 1021, y: 321, grid: 'grid-cols-[repeat(3,23px)]', cells: ['g1', 'g2', 'g3', 'g4', 'g5', 'g6', 'g7', 'g8', 'g9'].map(n => icons[n]) },
            { title: 'Matrix', x: 1125, y: 332, grid: 'grid-cols-[repeat(4,23px)]', cells: [
                icons.mat, times + dn('n'), times + up('-1'), '|×|',
                icons.fM, small('M') + '<sup class="text-[7px]">&lt;&gt;</sup>', small('M') + '<sup class="text-[7px]">T</sup>', small('m..n'),
                icons.dot, icons.cross, small('<b>Σ</b>υ'), icons.picture] },
            { title: 'Programming', x: 1094, y: 470, grid: 'grid-cols-[repeat(2,65px)]', cells: ['Add Line', icons.arrowLeft, 'if', 'otherwise', 'for', 'while', 'break', 'continue', 'return', 'on error'] },
            { title: 'Symbolic', x: 1247, y: 9, grid: 'grid-cols-[repeat(2,76px)]', cells: [
                icons.arrow, square + icons.arrow, 'Modifiers', 'float', 'rectangular', 'assume', 'solve', 'simplify', 'substitute', 'factor', 'expand', 'coeffs',
                'collect', 'series', 'parfrac', 'fourier', 'laplace', 'ztrans', 'invfourier', 'invlaplace', 'invztrans', small('M<sup>T</sup>') + '&nbsp;' + icons.arrow,
                small('M<sup>-1</sup>') + '&nbsp;' + icons.arrow, '|' + small('M') + '|&nbsp;' + icons.arrow, 'explicit', 'combine', 'confrac', 'rewrite'] },
            { title: 'Greek', x: 1250, y: 396, grid: 'grid-cols-[repeat(6,23px)]', cells:
                [...'αβγδεζηθικλμνξοπρστυϕφχψω'].map(g => `<i class="font-['Liberation_Serif',serif] text-[15px]">${g}</i>`)
                    .concat([...'ΑΒΓΔΕΖΗΘΙΚΛΜΝΞΟΠΡΣΤΥΦΧΨΩ'].map(g => `<span class="font-['Liberation_Serif',serif] text-base">${g}</span>`)) }
        ];

        palettes.forEach(p => {
            const el = document.createElement('section');
            el.className = "absolute bg-[#f0f0f0] shadow-[0_3px_14px_rgba(0,0,0,0.4)] font-['Liberation_Sans',sans-serif]";
            el.style.left = p.x + 'px';
            el.style.top = p.y + 'px';
            el.innerHTML = `
                <header class="h-[31px] flex items-center bg-white border-t border-[#6b6b6b] pl-2 pr-px">
                    <h2 class="flex-1 w-0 font-['Open_Sans',sans-serif] whitespace-nowrap">${p.title}</h2>
                    <button aria-label="Close" class="size-[19px] mt-[3px] shrink-0 bg-[#c75050] text-white text-[11px] font-bold leading-none font-['Open_Sans',sans-serif]">x</button>
                </header>
                <div class="grid ${p.grid} px-0.5 pt-px pb-[3px]">${p.cells.map(t => `<button class="h-[23px] flex items-center justify-center whitespace-nowrap text-[13px] leading-4">${t}</button>`).join('')}</div>`;
            sheet.appendChild(el);
        });

        // ---- taskbar ----
        const tasks = [['Explorer', 'explorer', 1], ['Steam', 'steam', 0], ['Chrome', 'chrome', 1], ['Sublime Text', 'sublime', 0], ['Pointer', 'hand', 0], ['VirtualBox', 'cube', 0], ['XMind', 'xmind', 0],
            ['Photoshop', 'ps', 0], ['Illustrator', 'ai', 0], ['Figma', 'figma', 0], ['Pictures', 'photos', 1], ['Word', 'word', 1], ['Mathcad', 'mBig', 2]];
        document.getElementById('tasks').innerHTML = tasks.map(([name, icon, state]) => {
            const line = ['', '<i class="absolute bottom-0 inset-x-1 h-0.5 bg-[#76b9ed]"></i>', '<i class="absolute bottom-0 inset-x-0 h-0.5 bg-[#76b9ed]"></i>'][state];
            return `<button aria-label="${name}" class="relative w-12 flex items-center justify-center ${state === 2 ? 'bg-[#3c4047]' : ''}">${icons[icon]}${line}</button>`;
        }).join('');
    </script>
</body>
</html>
